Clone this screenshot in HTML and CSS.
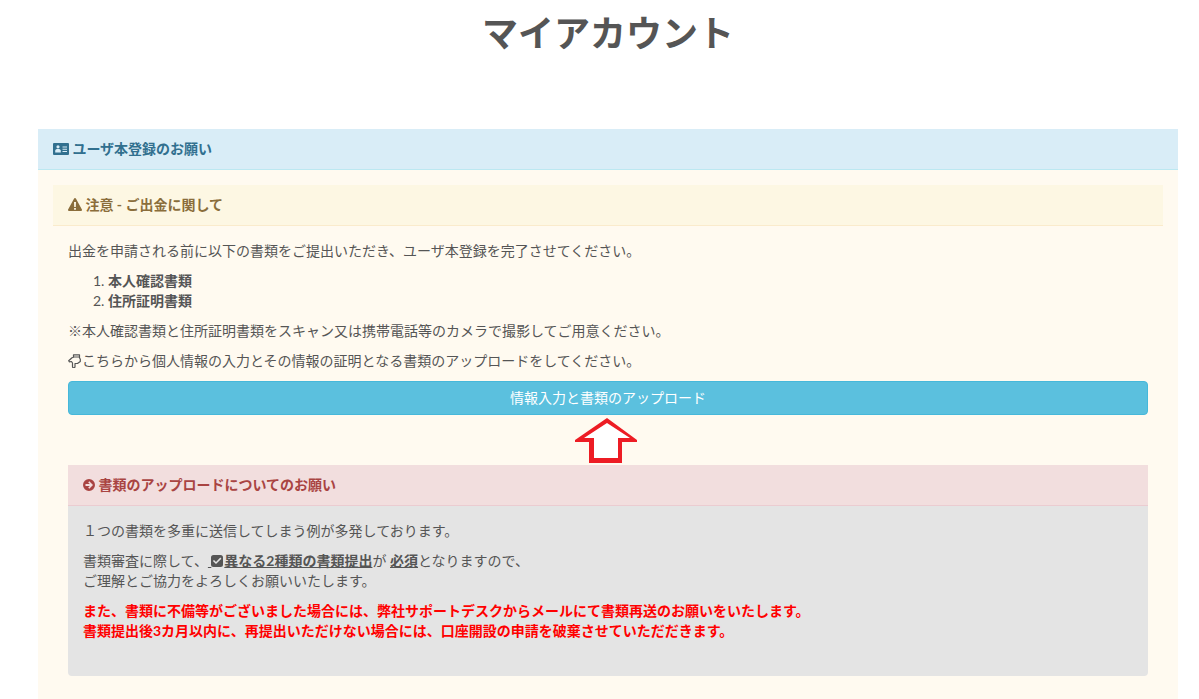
FILE: index.html
```html
<!DOCTYPE html>
<html lang="ja">
<head>
<meta charset="utf-8">
<title>マイアカウント</title>
<link rel="stylesheet" href="styles.css">
</head>
<body>
<div class="container">
  <h1 class="title">マイアカウント</h1>
  <section class="panel panel-info">
    <div class="panel-heading">
      <svg class="icon icon-card" viewBox="0 0 16 12"><path fill="currentColor" fill-rule="evenodd" d="M1 0h14a1 1 0 0 1 1 1v10a1 1 0 0 1-1 1H1a1 1 0 0 1-1-1V1a1 1 0 0 1 1-1zM5 2.200a1.600 1.600 0 1 0 0 3.200 1.600 1.600 0 0 0 0-3.200zM2.200 9.400h5.600V7.800C7.800 6.600 6.800 6 5 6s-2.800.6-2.800 1.800zM9.500 3.500v1h4.500v-1zM9.500 5.800v1h4.500v-1zM9.500 8v1h4.500V8z"/></svg>
      ユーザ本登録のお願い
    </div>
    <div class="panel-body">
      <section class="panel panel-warning">
        <div class="panel-heading">
          <svg class="icon icon-warn" viewBox="0 0 14 13"><path fill="currentColor" fill-rule="evenodd" d="M7 0c.4 0 .7.200.9.500l6 11c.4.700-.1 1.500-.9 1.500H1c-.8 0-1.300-.8-.9-1.500l6-11C6.300.200 6.600 0 7 0zM6 4l.2 5h1.600L8 4zM6.100 10v1.700h1.800V10z"/></svg>
          注意 - ご出金に関して
        </div>
        <div class="panel-body warning-body">
          <p>出金を申請される前に以下の書類をご提出いただき、ユーザ本登録を完了させてください。</p>
          <ol class="doc-list">
            <li><strong>本人確認書類</strong></li>
            <li><strong>住所証明書類</strong></li>
          </ol>
          <p>※本人確認書類と住所証明書類をスキャン又は携帯電話等のカメラで撮影してご用意ください。</p>
          <p><svg class="icon-hand" viewBox="0 0 13 14"><path fill="none" stroke="currentColor" stroke-width="1.200" stroke-linejoin="round" d="M5.500 .8h6v3l.8 1.500v2.200L9.500 9.500H7v3a1.200 1.200 0 0 1-2.500 0V9L3.500 7.500 1.300 7.800.7 6.800 4 3.800l1.500-.5z"/><path fill="none" stroke="currentColor" stroke-width="1" d="M5.500 3h6"/></svg>こちらから個人情報の入力とその情報の証明となる書類のアップロードをしてください。</p>
          <a class="btn-info" href="#">情報入力と書類のアップロード</a>
          <div class="arrow-row">
            <svg class="arrow" viewBox="0 0 62 45"><path fill="#ed1c24" d="M32 0 62 22V24H47V45H14V24H0V22z"/><path fill="#fff" d="M32 5 9 20H19V40H43V20H55z"/></svg>
          </div>
          <section class="panel panel-danger">
            <div class="panel-heading">
              <svg class="icon icon-arrow" viewBox="0 0 12 12"><path fill="currentColor" fill-rule="evenodd" d="M6 0a6 6 0 1 1 0 12A6 6 0 0 1 6 0zM6.300 2.300 5.200 3.400l1.700 1.700H2.500v1.800h4.400L5.200 8.600l1.100 1.100L10 6z"/></svg>
              書類のアップロードについてのお願い
            </div>
            <div class="panel-body notice-body">
              <p>１つの書類を多重に送信してしまう例が多発しております。</p>
              <p>書類審査に際して、<strong class="key"> <svg class="icon icon-check" viewBox="0 0 12 12"><path fill="currentColor" fill-rule="evenodd" d="M2.500 0h7A2.500 2.500 0 0 1 12 2.500v7A2.500 2.500 0 0 1 9.500 12h-7A2.500 2.500 0 0 1 0 9.500v-7A2.500 2.500 0 0 1 2.500 0zM9.300 2.600 5 6.900 3 4.900 1.900 6 5 9.100 10.400 3.700z"/></svg>異なる2種類の書類提出</strong>が <strong class="key">必須</strong>となりますので、<br>ご理解とご協力をよろしくお願いいたします。</p>
              <p class="alert-text">また、書類に不備等がございました場合には、弊社サポートデスクからメールにて書類再送のお願いをいたします。<br>書類提出後3カ月以内に、再提出いただけない場合には、口座開設の申請を破棄させていただだきます。</p>
            </div>
          </section>
        </div>
      </section>
    </div>
  </section>
</div>
</body>
</html>
```
FILE: styles.css
```css
* { box-sizing: border-box; }
html, body { margin: 0; height: 699px; overflow: hidden; background: #fff; }
body {
  font-family: Lato, "Noto Sans CJK JP", sans-serif;
  font-size: 14px;
  line-height: 20px;
  color: #555;
}
.container { width: 1140px; margin-left: 38px; }
.title {
  margin: 0;
  height: 129px;
  padding-top: 8px;
  font-size: 36px;
  line-height: 50px;
  font-weight: 700;
  text-align: center;
  color: #555;
}
p { margin: 0 0 10px; }
.panel { border-radius: 4px; }
.panel-heading {
  height: 41px;
  padding: 10px 15px;
  font-weight: 700;
  border-bottom: 1px solid;
}
.panel-body { padding: 15px; }
.panel-info { border-radius: 0; background: #fffaf0; }
.panel-info > .panel-heading { background: #d9edf7; border-color: #bce8f1; color: #31708f; }
.panel-warning { background: transparent; }
.panel-warning > .panel-heading { background: #fdf7e3; border-color: #faebcc; color: #8a6d3b; }
.panel-danger > .panel-heading { background: #f2dede; border-color: #ebccd1; color: #a94442; }
.doc-list { margin: 0 0 10px; padding-left: 40px; }
.icon-hand {
  display: inline-block;
  width: 13px;
  height: 14px;
  margin-right: 1px;
  vertical-align: -2px;
}
.btn-info {
  display: block;
  height: 34px;
  padding: 6px 12px;
  text-align: center;
  text-decoration: none;
  color: #fff;
  background: #5bc0de;
  border: 1px solid #46b8da;
  border-radius: 4px;
}
.arrow-row { display: flex; justify-content: center; height: 50px; padding: 3px 4px 0 0; }
.arrow { width: 62px; height: 45px; }
.notice-body { background: #e4e4e4; border-radius: 0 0 4px 4px; height: 170px; }
.key { text-decoration: underline; }
.alert-text { color: #f00; font-weight: 700; }
.icon { display: inline-block; vertical-align: -1px; }
.icon-card { width: 16px; height: 12px; }
.icon-warn { width: 14px; height: 13px; }
.icon-arrow { width: 12px; height: 12px; }
.icon-check { width: 12px; height: 12px; margin-right: 1px; }
```
